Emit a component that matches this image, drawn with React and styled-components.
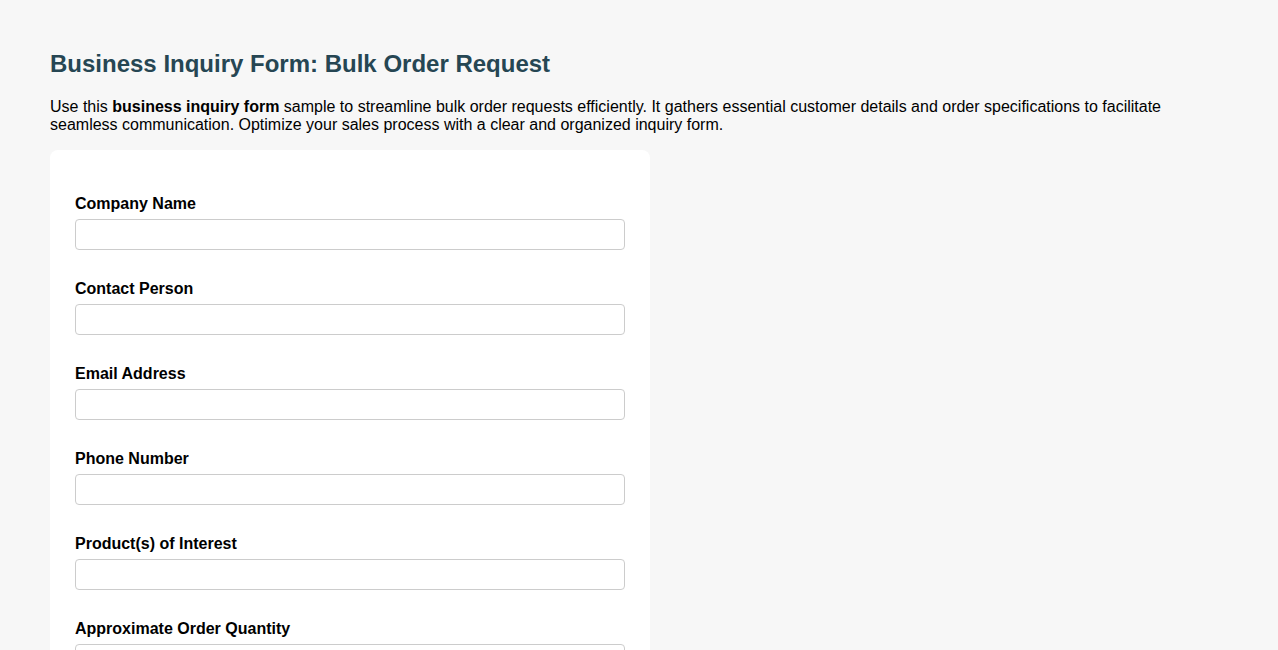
import React from "react";
import styled, { createGlobalStyle } from "styled-components";

const GlobalStyle = createGlobalStyle`
  body {
    margin: 0;
    background: #f7f7f7;
    font-family: "Liberation Sans", Arial, sans-serif;
    color: #000;
  }
  * { box-sizing: border-box; }
`;

const Page = styled.div`
  padding: 50px 50px 40px;
`;

const Title = styled.h1`
  margin: 0 0 20px;
  font-size: 24px;
  line-height: 28px;
  font-weight: bold;
  color: #264653;
`;

const Intro = styled.p`
  margin: 0 0 16px;
  font-size: 16px;
  line-height: 18px;
`;

const Card = styled.form`
  width: 600px;
  background: #fff;
  border-radius: 8px;
  padding: 15px 25px 25px;
`;

const Field = styled.div`
  margin-top: 30px;
`;

const Label = styled.label`
  display: block;
  font-size: 16px;
  line-height: 18px;
  font-weight: bold;
  margin-bottom: 6px;
`;

const Input = styled.input`
  display: block;
  width: 100%;
  height: 31px;
  border: 1px solid #ccc;
  border-radius: 4px;
  background: #fff;
  padding: 6px 8px;
  font: inherit;
`;

const fields = [
  { id: "company", label: "Company Name" },
  { id: "contact", label: "Contact Person" },
  { id: "email", label: "Email Address" },
  { id: "phone", label: "Phone Number" },
  { id: "products", label: "Product(s) of Interest" },
  { id: "quantity", label: "Approximate Order Quantity" },
  { id: "date", label: "Desired Delivery Date" }
];

const App = () => (
  <Page>
    <GlobalStyle />
    <Title>Business Inquiry Form: Bulk Order Request</Title>
    <Intro>
      Use this <b>business inquiry form</b> sample to streamline bulk order requests
      efficiently. It gathers essential customer details and order specifications to
      facilitate seamless communication. Optimize your sales process with a clear and
      organized inquiry form.
    </Intro>
    <Card>
      {fields.map(f => (
        <Field key={f.id}>
          <Label htmlFor={f.id}>{f.label}</Label>
          <Input id={f.id} type="text" />
        </Field>
      ))}
    </Card>
  </Page>
);

export default App;
